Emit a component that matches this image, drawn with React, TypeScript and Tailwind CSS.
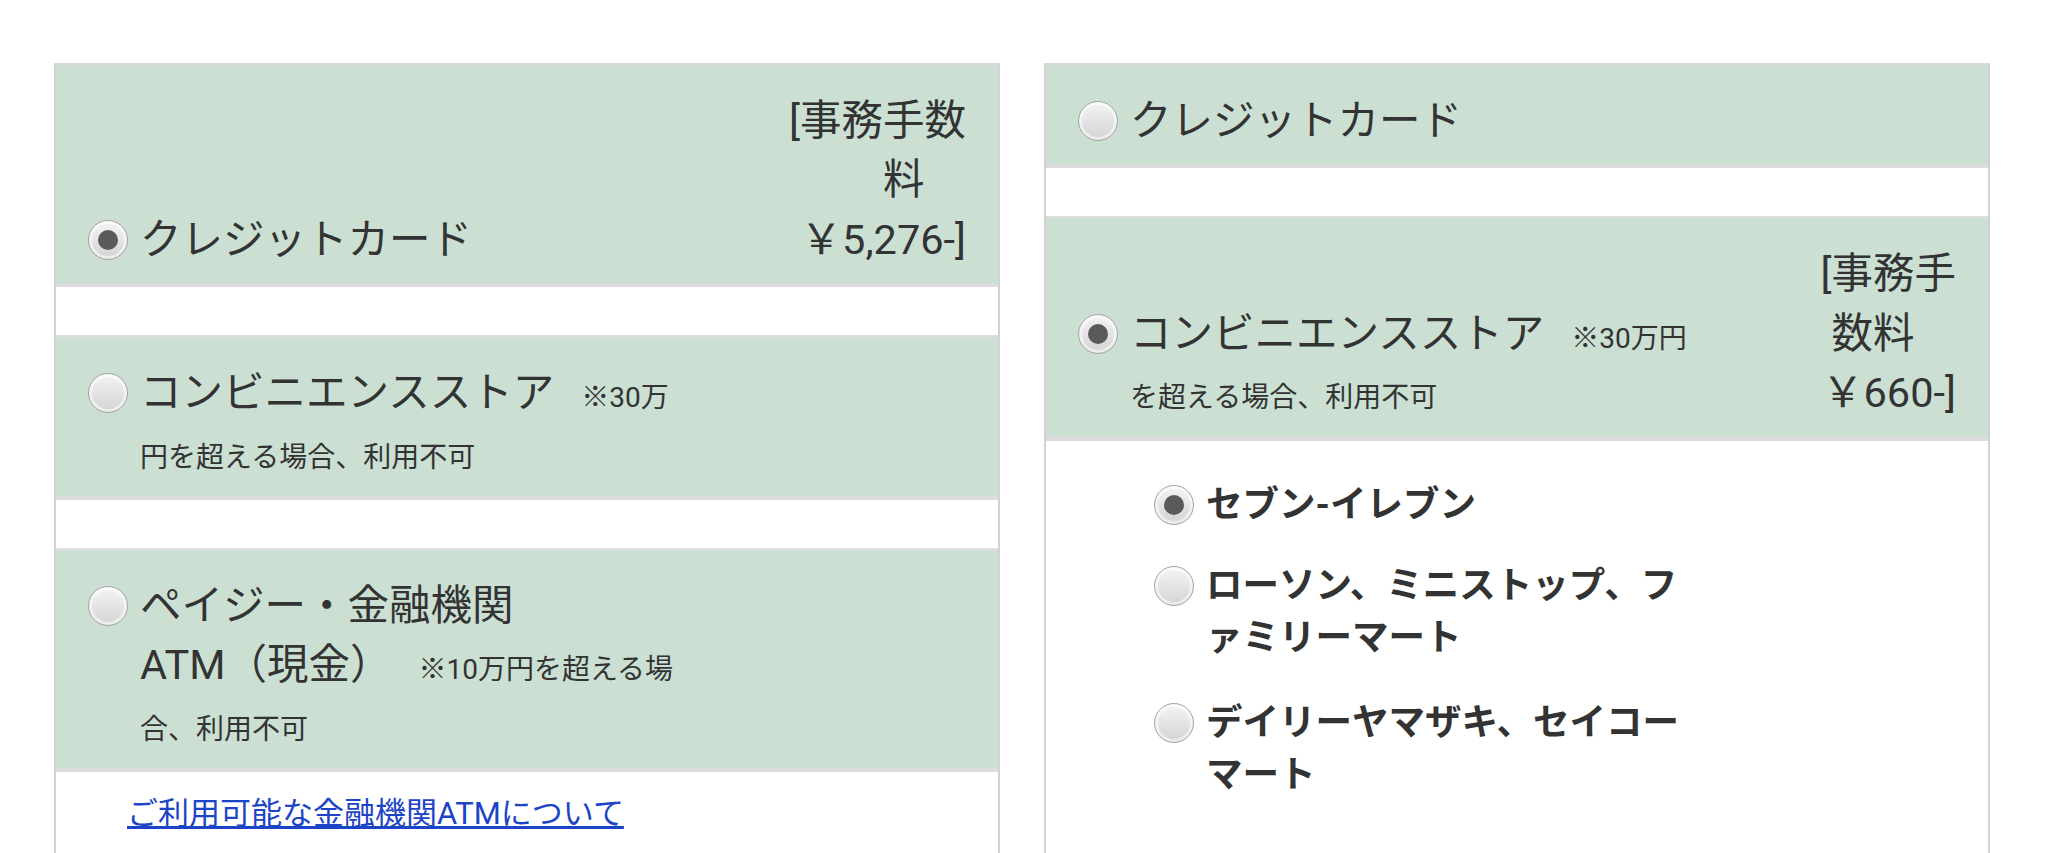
import React from "react";

const green = "bg-[#cbe0d3]";

function Radio({ checked = false }: { checked?: boolean }) {
  return (
    <span className="flex h-10 w-10 shrink-0 items-center justify-center rounded-full border border-[#a5a5a5] bg-linear-to-b from-[#f5f5f5] to-[#d3d3d3] shadow-[inset_0_0_0_3px_rgba(255,255,255,0.55)]">
      {checked && <span className="h-5 w-5 rounded-full bg-[#5a5a5a]" />}
    </span>
  );
}

function Fee({ top, mid, price }: { top: string; mid: string; price: string }) {
  return (
    <div className="flex shrink-0 flex-col items-end text-[41.5px] leading-[59.4px]">
      <span>{top}</span>
      <span className="pr-[41.5px]">{mid}</span>
      <span>{price}</span>
    </div>
  );
}

function Row({
  checked,
  width,
  children,
  fee,
}: {
  checked?: boolean;
  width: string;
  children: React.ReactNode;
  fee?: React.ReactNode;
}) {
  return (
    <div
      className={`flex items-end justify-between border-b-4 border-[#dcdcdc] ${green} pt-[26px] pb-[14px] pl-8 pr-8`}
    >
      <div className="flex items-start gap-3">
        <div className="flex h-[59.4px] items-center">
          <Radio checked={checked} />
        </div>
        <div className={`${width} text-[41.5px] leading-[59.4px]`}>{children}</div>
      </div>
      {fee}
    </div>
  );
}

function Spacer() {
  return <div className="h-[50px] border-b-2 border-[#dedede] bg-white" />;
}

function Note({ children }: { children: React.ReactNode }) {
  return <span className="ml-[27px] text-[28px] leading-[28px]">{children}</span>;
}

function Store({
  checked,
  className = "",
  children,
}: {
  checked?: boolean;
  className?: string;
  children: React.ReactNode;
}) {
  return (
    <div className={`flex items-start gap-3 ${className}`}>
      <div className="flex h-[52px] items-center">
        <Radio checked={checked} />
      </div>
      <div className="w-[495px] text-[36.5px] font-bold leading-[52px] [line-break:loose]">
        {children}
      </div>
    </div>
  );
}

export default function App() {
  return (
    <div className="h-[853px] overflow-hidden bg-white font-['Roboto','Noto_Sans_CJK_JP',sans-serif] text-[#333]">
      <div className="flex gap-[44px] pl-[54px] pt-[63px]">
        {/* left column */}
        <div className="h-[800px] w-[946px] border-2 border-b-0 border-[#d2d2d2] border-t-[#dadada]">
          <Row
            checked
            width="w-[545px]"
            fee={<Fee top="[事務手数" mid="料" price="￥5,276-]" />}
          >
            クレジットカード
          </Row>
          <Spacer />
          <Row width="w-[545px]">
            コンビニエンスストア
            <Note>※30万円を超える場合、利用不可</Note>
          </Row>
          <Spacer />
          <Row width="w-[545px]">
            ペイジー・金融機関
            <br />
            ATM（現金）
            <Note>※10万円を超える場合、利用不可</Note>
          </Row>
          <div className="pl-[71px] pt-[20px]">
            <a href="#" className="text-[31px] leading-[44px] text-[#1c44c7] underline">
              ご利用可能な金融機関ATMについて
            </a>
          </div>
        </div>

        {/* right column */}
        <div className="h-[800px] w-[946px] border-2 border-b-0 border-[#d2d2d2] border-t-[#dadada]">
          <Row width="w-[572px]">クレジットカード</Row>
          <Spacer />
          <Row
            checked
            width="w-[572px]"
            fee={<Fee top="[事務手" mid="数料" price="￥660-]" />}
          >
            コンビニエンスストア
            <Note>※30万円を超える場合、利用不可</Note>
          </Row>
          <div className="flex flex-col pl-[108px] pt-[38px]">
            <Store checked>セブン-イレブン</Store>
            <Store className="mt-[29px]">ローソン、ミニストップ、ファミリーマート</Store>
            <Store className="mt-[33px]">デイリーヤマザキ、セイコーマート</Store>
          </div>
        </div>
      </div>
    </div>
  );
}
